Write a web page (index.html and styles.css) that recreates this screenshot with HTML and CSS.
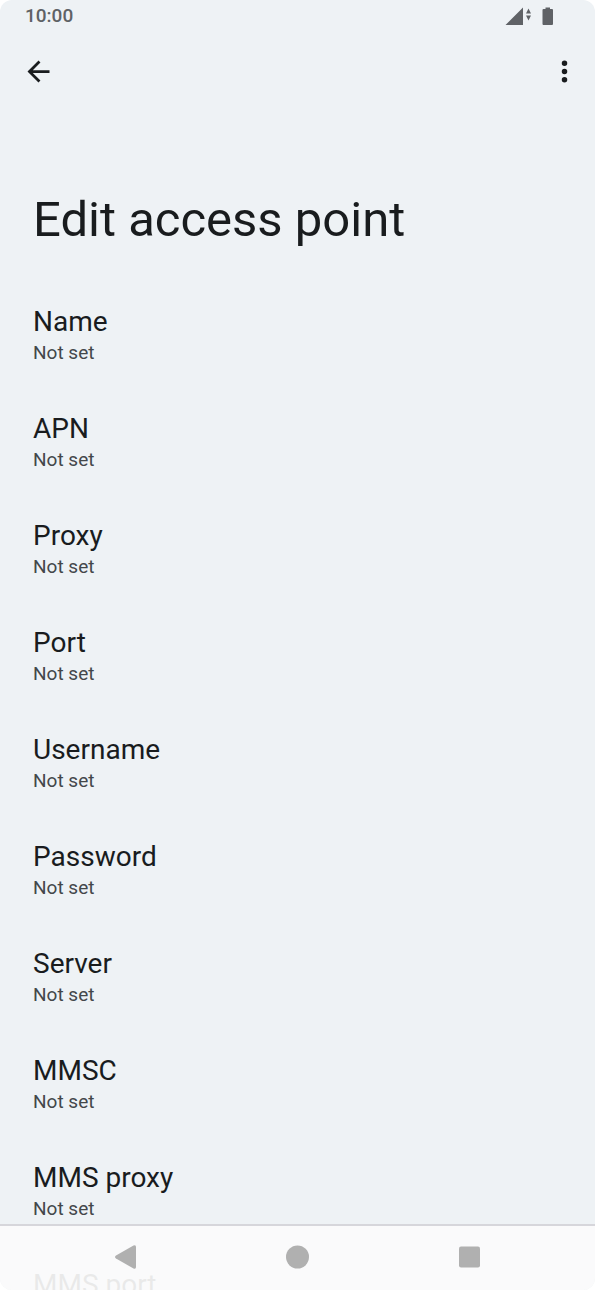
FILE: index.html
```html
<!DOCTYPE html>
<html lang="en">
<head>
<meta charset="utf-8">
<meta name="viewport" content="width=device-width, initial-scale=1">
<title>Edit access point</title>
<link rel="stylesheet" href="styles.css">
</head>
<body>
<div class="screen">
  <header class="status">
    <span class="clock">10:00</span>
    <svg class="signal" width="28" height="20" viewBox="0 0 28 20" aria-hidden="true"><path d="M18 1.500v17.500H0.500zM21 7.500l2.500-5 2.500 5zM21 9.500h5l-2.500 5z"/></svg>
    <svg class="battery" width="12" height="20" viewBox="0 0 12 20" aria-hidden="true"><path d="M3.500 1.500h4.500v1.500h2q1 0 1 1v14q0 1-1 1H1.500q-1 0-1-1V4q0-1 1-1h2z"/></svg>
  </header>
  <div class="toolbar">
    <button class="icon-button" type="button" aria-label="Navigate up"><svg width="33" height="33" viewBox="0 0 24 24"><path d="M20 11H7.830l5.590-5.590L12 4l-8 8 8 8 1.410-1.410L7.830 13H20z"/></svg></button>
    <button class="icon-button" type="button" aria-label="More options"><svg width="33" height="33" viewBox="0 0 24 24"><path d="M12 8a2 2 0 1 0 0-4 2 2 0 0 0 0 4zm0 2a2 2 0 1 0 0 4 2 2 0 0 0 0-4zm0 6a2 2 0 1 0 0 4 2 2 0 0 0 0-4z"/></svg></button>
  </div>
  <main class="content">
    <h1 class="title">Edit access point</h1>
    <ul class="settings">
      <li><button class="row" type="button"><span class="label">Name</span><span class="value">Not set</span></button></li>
      <li><button class="row" type="button"><span class="label">APN</span><span class="value">Not set</span></button></li>
      <li><button class="row" type="button"><span class="label">Proxy</span><span class="value">Not set</span></button></li>
      <li><button class="row" type="button"><span class="label">Port</span><span class="value">Not set</span></button></li>
      <li><button class="row" type="button"><span class="label">Username</span><span class="value">Not set</span></button></li>
      <li><button class="row" type="button"><span class="label">Password</span><span class="value">Not set</span></button></li>
      <li><button class="row" type="button"><span class="label">Server</span><span class="value">Not set</span></button></li>
      <li><button class="row" type="button"><span class="label">MMSC</span><span class="value">Not set</span></button></li>
      <li><button class="row" type="button"><span class="label">MMS proxy</span><span class="value">Not set</span></button></li>
      <li><button class="row" type="button"><span class="label">MMS port</span></button></li>
    </ul>
  </main>
  <nav class="navbar" aria-label="System navigation">
    <button class="nav-button" type="button" aria-label="Back"><svg width="24" height="24" viewBox="0 0 24 24"><path d="M22 2v20q0 2.500-2.500 1.500L2 13.500q-2-1.500 0-3L19.500 0.500Q22-0.500 22 2z"/></svg></button>
    <button class="nav-button" type="button" aria-label="Home"><svg width="24" height="24" viewBox="0 0 24 24"><circle cx="11.500" cy="12" r="11.500"/></svg></button>
    <button class="nav-button" type="button" aria-label="Recent apps"><svg width="24" height="24" viewBox="0 0 24 24"><rect x="1" y="1.500" width="21" height="21" rx="2"/></svg></button>
  </nav>
</div>
</body>
</html>
```
FILE: styles.css
```css
* { box-sizing: border-box; }
body { margin: 0; background: #fff; font-family: Roboto, "Liberation Sans", sans-serif; color: #191c1e; }
button { border: 0; background: none; padding: 0; margin: 0; font: inherit; color: inherit; }
svg { display: block; fill: currentColor; }
.screen { display: flex; flex-direction: column; height: 100vh; position: relative; overflow: hidden; border-radius: 12px; background: #eef2f5; }
.status { flex: none; display: flex; align-items: center; height: 32px; padding: 0 41px 0 25px; color: #5f6266; }
.clock { margin-right: auto; font-size: 19px; line-height: 32px; font-weight: 500; }
.signal { margin-top: -1px; }
.battery { margin: -1px 0 0 9px; }
.toolbar { flex: none; display: flex; justify-content: space-between; align-items: center; height: 78px; padding: 0 14px 0 22px; }
.content { flex: 1; min-height: 0; overflow: hidden; }
.title { margin: 0; padding: 80px 33px 42px; font-size: 49px; line-height: 60px; font-weight: 400; }
.settings { list-style: none; margin: 0; padding: 0; }
.row { display: flex; flex-direction: column; width: 100%; min-height: 107px; padding: 12px 33px; text-align: left; }
.label { font-size: 28px; line-height: 36px; }
.value { font-size: 19px; line-height: 26px; color: #43474a; }
.navbar { position: absolute; inset: auto 0 0; display: flex; justify-content: center; gap: 148px; height: 66px; padding-bottom: 2px; align-items: center; border-top: 2px solid #d6d6db; background: rgba(251, 251, 251, 0.92); color: #b0b0b0; }
```
